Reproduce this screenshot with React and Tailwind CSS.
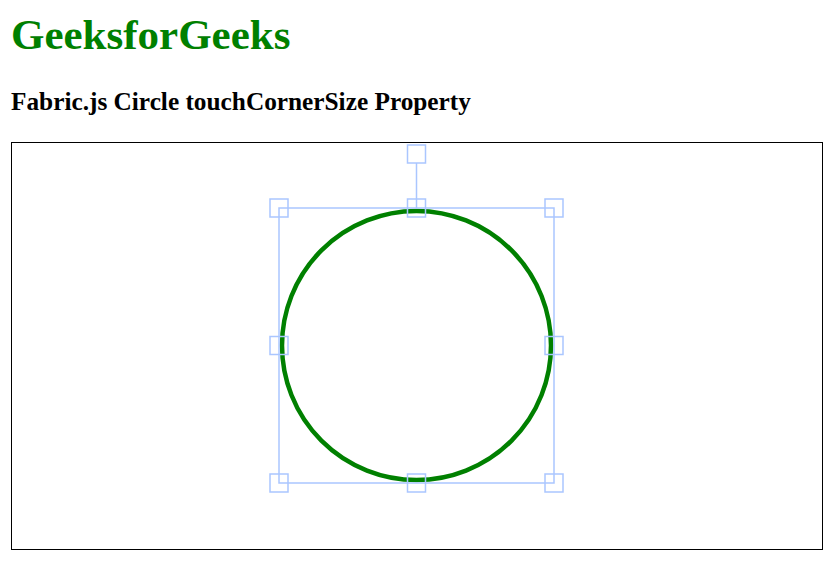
export default function App() {
  const c = "rgb(170,198,255)";
  const cx = 404.5;
  const cy = 202.5;
  const h = 137.5;
  const s = 18;
  const pts = [
    [cx - h, cy - h], [cx, cy - h], [cx + h, cy - h],
    [cx - h, cy], [cx + h, cy],
    [cx - h, cy + h], [cx, cy + h], [cx + h, cy + h],
    [cx, 11],
  ];
  return (
    <div className="bg-white min-h-[569px] pl-[11px] pt-[11px]" style={{ fontFamily: '"Liberation Serif", "Times New Roman", serif' }}>
      <h1 className="text-[43px] leading-[48px] font-bold text-[#008000]">GeeksforGeeks</h1>
      <h2 className="mt-[28px] text-[25.3px] leading-[29px] font-bold text-black">Fabric.js Circle touchCornerSize Property</h2>
      <div className="mt-[26px] w-[812px] h-[408px] border border-black">
        <svg width="810" height="406" viewBox="0 0 810 406" className="block">
          <circle cx={cx} cy={cy} r={134.5} fill="none" stroke="#008000" strokeWidth="4.5" />
          <rect x={cx - h} y={cy - h} width={2 * h} height={2 * h} fill="none" stroke={c} strokeWidth="1.5" />
          <line x1={cx} y1={20} x2={cx} y2={cy - h} stroke={c} strokeWidth="1.5" />
          {pts.map(([x, y], i) => (
            <rect key={i} x={x - s / 2} y={y - s / 2} width={s} height={s} fill="none" stroke={c} strokeWidth="1.5" />
          ))}
        </svg>
      </div>
    </div>
  );
}
